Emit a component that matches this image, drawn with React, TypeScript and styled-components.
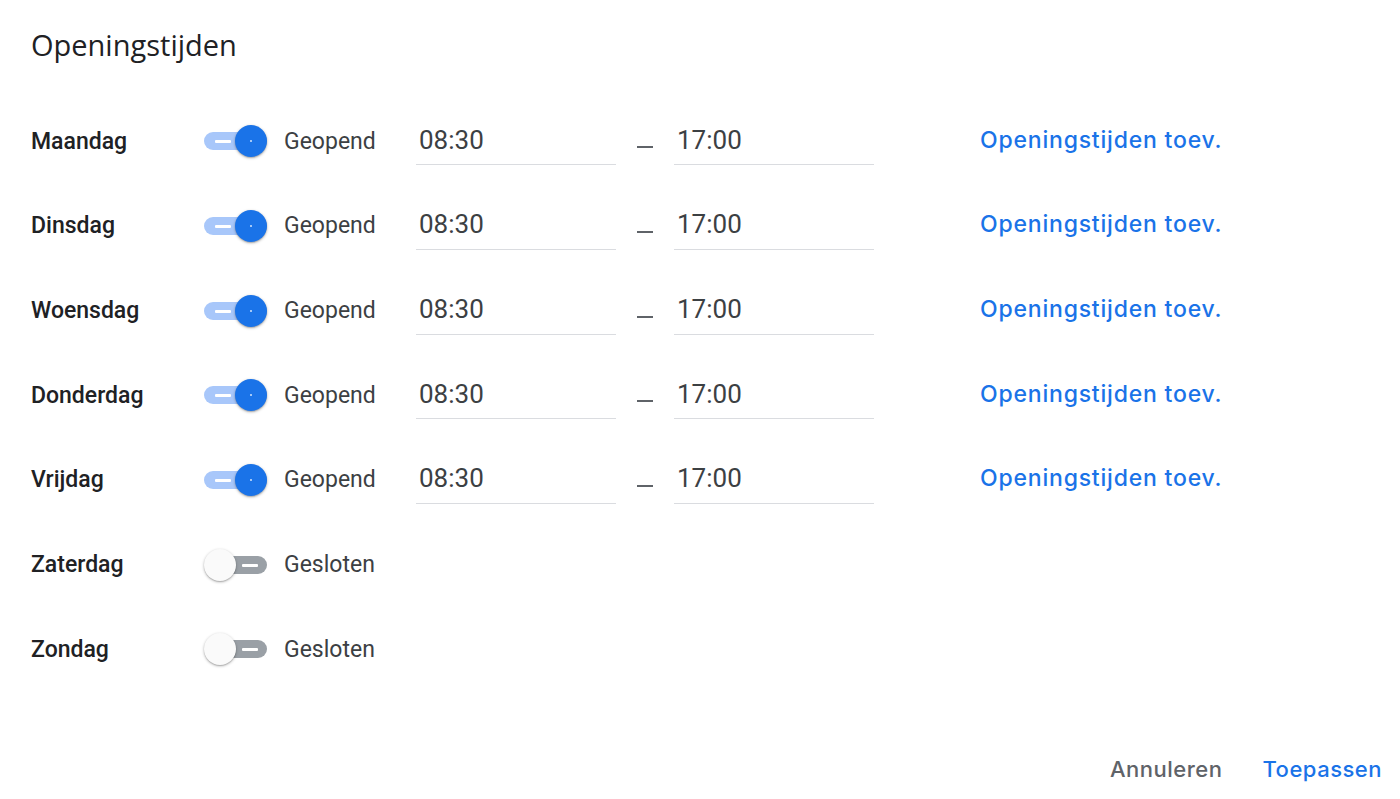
import React from "react";
import styled, { createGlobalStyle } from "styled-components";

const Global = createGlobalStyle`
  html, body { margin: 0; padding: 0; background: #ffffff; }
  body { font-family: Roboto, "Liberation Sans", sans-serif; }
  * { box-sizing: border-box; }
`;

const Page = styled.div`
  width: 1400px;
  height: 799px;
  padding: 0 18px 0 31px;
  display: flex;
  flex-direction: column;
  overflow: hidden;
`;

const Title = styled.h1`
  margin: 28px 0 0;
  height: 71px;
  font-family: "Open Sans", sans-serif;
  font-weight: 400;
  font-size: 29px;
  line-height: 34px;
  color: #202124;
`;

const List = styled.div`
  display: flex;
  flex-direction: column;
`;

const Row = styled.div`
  height: 84.67px;
  display: flex;
  align-items: center;
`;

const Day = styled.div`
  width: 172px;
  font-size: 23px;
  font-weight: 500;
  color: #202124;
`;

const Track = styled.div`
  position: relative;
  width: 64px;
  height: 32px;
  flex: none;
`;

const Rail = styled.div<{ $on: boolean }>`
  position: absolute;
  top: 7px;
  height: 18px;
  border-radius: 9px;
  left: ${(p) => (p.$on ? "1px" : "16px")};
  right: 0;
  background: ${(p) => (p.$on ? "#a8c7fa" : "#9aa0a6")};
`;

const Dash = styled.div<{ $on: boolean }>`
  position: absolute;
  top: 15px;
  height: 3px;
  width: 16px;
  border-radius: 1px;
  background: #ffffff;
  left: ${(p) => (p.$on ? "12px" : "39px")};
`;

const Thumb = styled.div<{ $on: boolean }>`
  position: absolute;
  top: 0;
  width: 32px;
  height: 32px;
  border-radius: 50%;
  left: ${(p) => (p.$on ? "32px" : "1px")};
  background: ${(p) => (p.$on ? "#1a73e8" : "#fafafa")};
  box-shadow: 0 1px 3px rgba(0, 0, 0, 0.3), 0 1px 1px rgba(0, 0, 0, 0.12);
  display: flex;
  align-items: center;
  justify-content: center;
  &::after {
    content: "";
    width: 2px;
    height: 2px;
    border-radius: 50%;
    background: ${(p) => (p.$on ? "rgba(255,255,255,0.8)" : "transparent")};
  }
`;

const State = styled.div`
  width: 149px;
  padding-left: 17px;
  font-size: 23px;
  color: #3c4043;
`;

const TimeField = styled.div`
  width: 200px;
  height: 48px;
  padding: 0 0 2px 3px;
  display: flex;
  align-items: center;
  border-bottom: 1px solid #dadce0;
  font-size: 26px;
  color: #3c4043;
`;

const Sep = styled.div`
  width: 58px;
  display: flex;
  justify-content: center;
  padding-top: 12px;
  &::before {
    content: "";
    width: 16px;
    height: 2px;
    background: #5f6368;
  }
`;

const AddLink = styled.a`
  margin-left: 106px;
  padding-bottom: 3px;
  font-family: Inter, sans-serif;
  font-size: 23px;
  font-weight: 500;
  letter-spacing: 0.8px;
  color: #1a73e8;
  text-decoration: none;
  cursor: pointer;
`;

const Footer = styled.div`
  margin-top: 57px;
  height: 40px;
  display: flex;
  justify-content: flex-end;
  align-items: center;
  gap: 40px;
`;

const Button = styled.button<{ $primary?: boolean }>`
  border: none;
  background: none;
  padding: 0;
  font-family: Inter, sans-serif;
  font-size: 22px;
  font-weight: 500;
  letter-spacing: 0.5px;
  color: ${(p) => (p.$primary ? "#1a73e8" : "#5f6368")};
  cursor: pointer;
`;

const days = [
  { name: "Maandag", open: true },
  { name: "Dinsdag", open: true },
  { name: "Woensdag", open: true },
  { name: "Donderdag", open: true },
  { name: "Vrijdag", open: true },
  { name: "Zaterdag", open: false },
  { name: "Zondag", open: false },
];

const Toggle = ({ on }: { on: boolean }) => (
  <Track>
    <Rail $on={on} />
    <Dash $on={on} />
    <Thumb $on={on} />
  </Track>
);

export default function App() {
  return (
    <>
      <Global />
      <Page>
        <Title>Openingstijden</Title>
        <List>
          {days.map((d) => (
            <Row key={d.name}>
              <Day>{d.name}</Day>
              <Toggle on={d.open} />
              <State>{d.open ? "Geopend" : "Gesloten"}</State>
              {d.open && (
                <>
                  <TimeField>08:30</TimeField>
                  <Sep />
                  <TimeField>17:00</TimeField>
                  <AddLink>Openingstijden toev.</AddLink>
                </>
              )}
            </Row>
          ))}
        </List>
        <Footer>
          <Button>Annuleren</Button>
          <Button $primary>Toepassen</Button>
        </Footer>
      </Page>
    </>
  );
}
